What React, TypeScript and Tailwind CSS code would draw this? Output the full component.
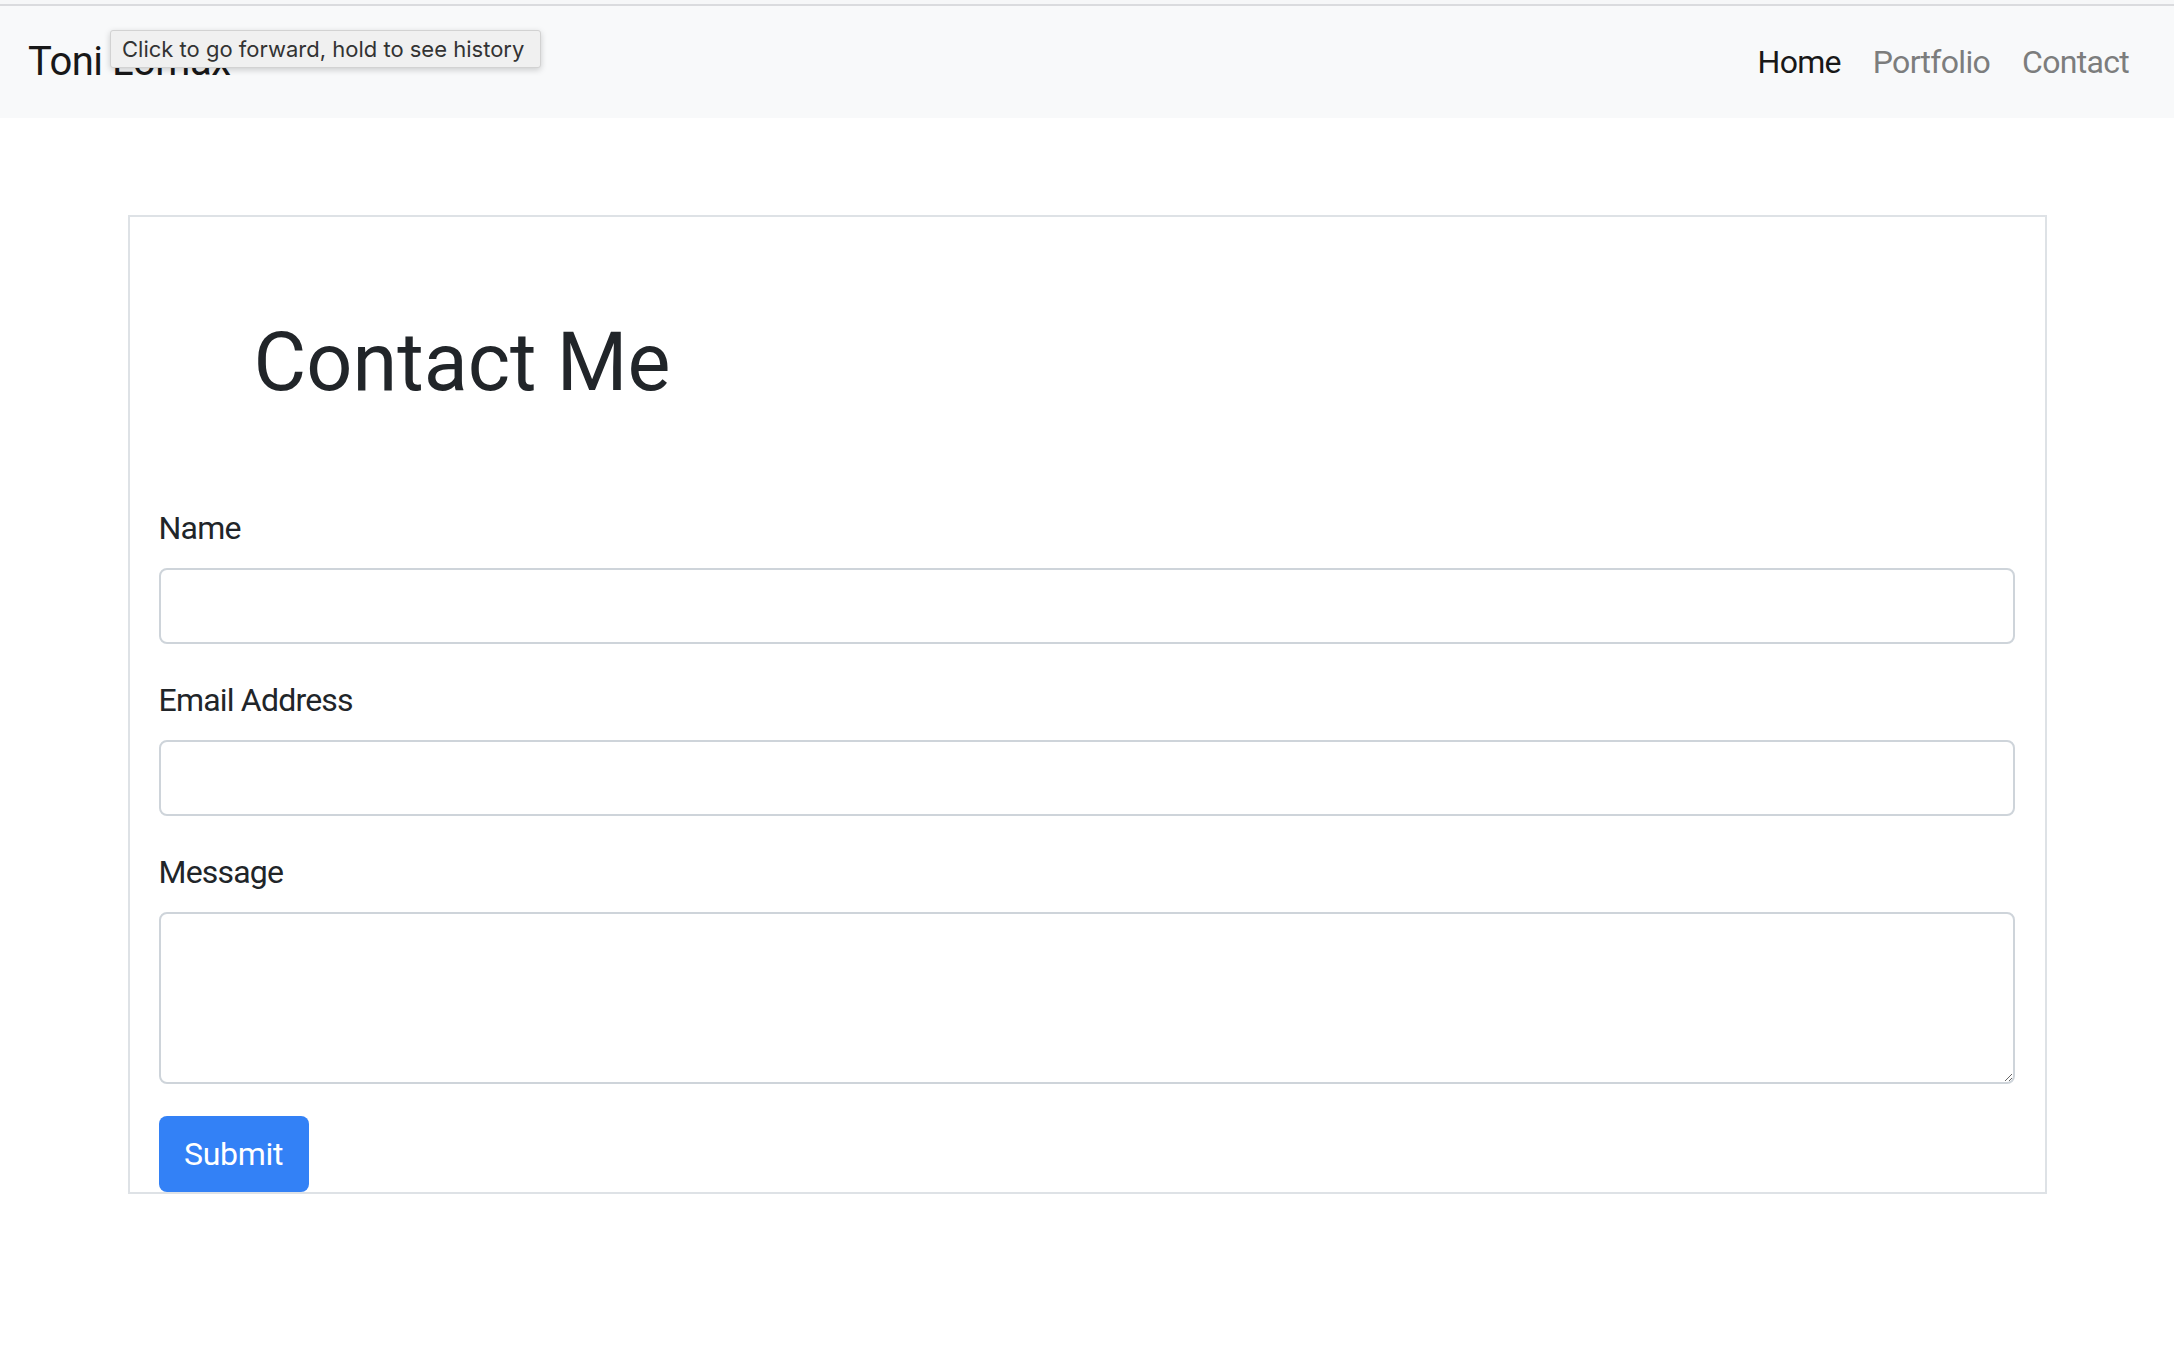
import React from "react";

export default function App() {
  return (
    <div className="relative min-h-screen w-full bg-white" style={{ fontFamily: "Roboto, 'Liberation Sans', sans-serif" }}>
      <div className="h-[4px] bg-[#f6f7f8]" />
      <div className="h-[2px] bg-[#dadbde]" />
      <nav className="flex h-[112px] items-center justify-between bg-[#f8f9fa] pl-[28px] pr-[29px]">
        <a className="text-[40px] leading-[60px] tracking-[-0.5px] text-[#181818]">Toni Lomax</a>
        <ul className="flex items-center">
          <li><a className="px-[16px] text-[32px] leading-[48px] tracking-[-0.7px] text-[#181818]">Home</a></li>
          <li><a className="px-[16px] text-[32px] leading-[48px] tracking-[-0.7px] text-[#7c7d7d]">Portfolio</a></li>
          <li><a className="px-[16px] text-[32px] leading-[48px] tracking-[-0.7px] text-[#7c7d7d]">Contact</a></li>
        </ul>
      </nav>

      <main className="mx-auto mt-[97px] w-[1919px] border-2 border-[#dee2e6]">
        <h1 className="pl-[124px] pt-[98px] mb-[93px] text-[81px] leading-[96px] font-normal text-[#212529]">Contact Me</h1>
        <form className="pl-[29px] pr-[30px]">
          <div className="mb-[32px]">
            <label className="mb-[16px] block text-[32px] leading-[48px] tracking-[-0.8px] text-[#212529]">Name</label>
            <input className="block h-[76px] w-full rounded-[8px] border-2 border-[#ced4da] bg-white px-[24px] text-[32px]" />
          </div>
          <div className="mb-[32px]">
            <label className="mb-[16px] block text-[32px] leading-[48px] tracking-[-0.8px] text-[#212529]">Email Address</label>
            <input className="block h-[76px] w-full rounded-[8px] border-2 border-[#ced4da] bg-white px-[24px] text-[32px]" />
          </div>
          <div className="mb-[32px]">
            <label className="mb-[16px] block text-[32px] leading-[48px] tracking-[-0.8px] text-[#212529]">Message</label>
            <textarea className="block h-[172px] w-full rounded-[8px] border-2 border-[#ced4da] bg-white px-[24px] py-[12px] text-[32px]" />
          </div>
          <button type="button" className="block h-[76px] w-[150px] rounded-[8px] bg-[#3381f6] text-[32px] leading-[48px] tracking-[-0.3px] text-white">Submit</button>
        </form>
      </main>

      <div
        className="absolute left-[110px] top-[30px] flex h-[38px] w-[431px] items-center rounded-[3px] border border-[#d2d2d2] bg-[#f0f0f0] pl-[11px] text-[22px] text-[#333333] shadow-[0_2px_6px_rgba(0,0,0,0.18)]"
        style={{ fontFamily: "Inter, 'Liberation Sans', sans-serif" }}
      >
        Click to go forward, hold to see history
      </div>
    </div>
  );
}
